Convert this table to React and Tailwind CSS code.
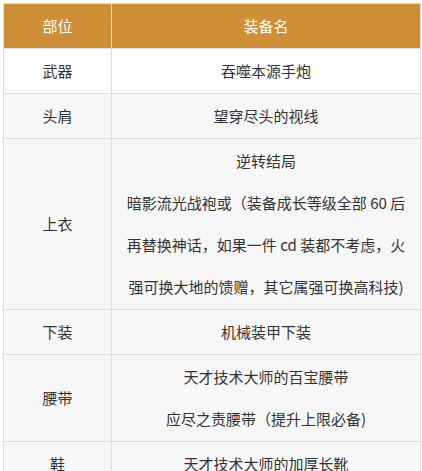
import React from "react";

const rows = [
  { part: "武器", items: ["吞噬本源手炮"] },
  { part: "头肩", items: ["望穿尽头的视线"] },
  {
    part: "上衣",
    items: [
      "逆转结局",
      "暗影流光战袍或（装备成长等级全部 60 后再替换神话，如果一件 cd 装都不考虑，火强可换大地的馈赠，其它属强可换高科技)",
    ],
  },
  { part: "下装", items: ["机械装甲下装"] },
  { part: "腰带", items: ["天才技术大师的百宝腰带", "应尽之责腰带（提升上限必备)"] },
  { part: "鞋", items: ["天才技术大师的加厚长靴"] },
];

export default function App() {
  return (
    <div className="h-[471px] overflow-hidden bg-white pt-[3px] pl-[3px] pr-px font-['Noto_Sans_CJK_SC','Noto_Sans',sans-serif] text-[15px] text-[#333]">
      <table className="w-full border-collapse table-fixed">
        <colgroup>
          <col className="w-[108px]" />
          <col />
        </colgroup>
        <thead>
          <tr className="bg-[#cf8f37] text-white">
            <th className="border border-[#ddd] py-px font-normal leading-[42px]">部位</th>
            <th className="border border-[#ddd] py-px font-normal leading-[42px]">装备名</th>
          </tr>
        </thead>
        <tbody>
          {rows.map((r, i) => (
            <tr key={r.part} className={i === 0 ? "bg-white" : "bg-[#f7f7f7]"}>
              <td className="border border-[#ddd] py-px text-center leading-[42px]">{r.part}</td>
              <td className="border border-[#ddd] px-[14px] py-px text-center leading-[42px]">
                {r.items.map((t) => (
                  <p key={t}>{t}</p>
                ))}
              </td>
            </tr>
          ))}
        </tbody>
      </table>
    </div>
  );
}
